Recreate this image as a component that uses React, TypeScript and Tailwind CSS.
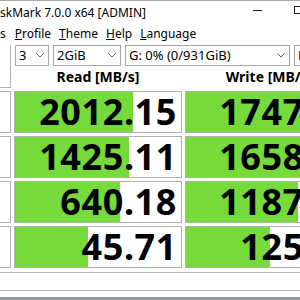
import React from 'react';

const rows = [
  { read: '2012.15', readBar: 118, write: '1747.42', writeBar: 116 },
  { read: '1425.11', readBar: 114, write: '1658.36', writeBar: 116 },
  { read: '640.18', readBar: 105, write: '1187.60', writeBar: 112 },
  { read: '45.71', readBar: 73, write: '125.93', writeBar: 84 },
];

const Chevron = () => (
  <svg width="8" height="5" viewBox="0 0 8 5" className="shrink-0">
    <polyline points="0.5,0.5 4,4 7.5,0.5" fill="none" stroke="#606060" strokeWidth="1" />
  </svg>
);

const Combo = ({ label, width }: { label: string; width: string }) => (
  <div className={`${width} h-[21px] shrink-0 flex items-center justify-between pl-[3px] pr-[4px] border border-[#a5a5a5] bg-white text-[13px] text-black`}>
    <span className="whitespace-nowrap leading-none">{label}</span>
    <Chevron />
  </div>
);

const ValueBox = ({ value, bar, width }: { value: string; bar: number; width: string }) => (
  <div className={`relative ${width} h-[42px] shrink-0 border border-[#b0b0b0] bg-white flex items-center justify-end pr-[4px]`}>
    <div className="absolute left-0 top-0 bottom-0 bg-[#76da3b]" style={{ width: bar }} />
    <span
      className="relative text-[36px] font-bold leading-none tracking-[0.6px] text-black"
      style={{ fontFamily: '"Liberation Sans Narrow", "Noto Sans", sans-serif' }}
    >
      {value}
    </span>
  </div>
);

const App: React.FC = () => {
  return (
    <div
      className="w-[300px] h-[300px] overflow-hidden bg-white flex flex-col text-black"
      style={{ fontFamily: '"Noto Sans", sans-serif' }}
    >
      {/* title bar */}
      <div className="h-[24px] shrink-0 border-t border-[#a8a8a8] flex items-center">
        <span className="w-[253px] shrink-0 text-[12px] whitespace-nowrap leading-none">skMark 7.0.0 x64 [ADMIN]</span>
        <div className="w-[9px] h-px bg-[#202020] shrink-0 -mt-[4px]" />
        <div className="w-[9px] h-[8px] border border-[#202020] shrink-0 ml-[32px] -mt-[5px]" />
      </div>

      {/* menu */}
      <div className="h-[20px] shrink-0 flex items-center gap-[8px] text-[12px] leading-none whitespace-nowrap">
        <span>s</span>
        <span className="ml-[1px]"><u>P</u>rofile</span>
        <span><u>T</u>heme</span>
        <span><u>H</u>elp</span>
        <span><u>L</u>anguage</span>
      </div>

      {/* controls + headers */}
      <div className="flex shrink-0 mt-[1px]">
        <div className="w-[11px] h-[43px] shrink-0 border-r border-b border-[#b0b0b0] bg-white" />
        <div className="flex flex-col ml-[4px]">
          <div className="flex gap-[4px] h-[21px]">
            <Combo label="3" width="w-[34px]" />
            <Combo label="2GiB" width="w-[68px]" />
            <Combo label="G: 0% (0/931GiB)" width="w-[165px]" />
            <Combo label="MB/s" width="w-[60px]" />
          </div>
          <div className="flex gap-[3px] h-[22px] items-center -ml-[1px]">
            <div className="w-[168px] text-center text-[14px] font-bold leading-none whitespace-nowrap">Read [MB/s]</div>
            <div className="w-[168px] shrink-0 text-center text-[14px] font-bold leading-none whitespace-nowrap">Write [MB/s]</div>
          </div>
        </div>
      </div>

      {/* results */}
      <div className="flex flex-col gap-[3px] mt-[3px] shrink-0">
        {rows.map((r) => (
          <div key={r.read} className="flex gap-[3px]">
            <div className="w-[11px] h-[42px] shrink-0 border-r border-y border-[#b0b0b0] bg-white" />
            <ValueBox value={r.read} bar={r.readBar} width="w-[168px]" />
            <ValueBox value={r.write} bar={r.writeBar} width="w-[177px]" />
          </div>
        ))}
      </div>

      {/* comment box */}
      <div className="h-[19px] shrink-0 mt-[4px] border-y border-[#b8b8b8] bg-white" />
      <div className="flex-1" />
      <div className="h-[3px] shrink-0 bg-[#8a9aa0]" />
    </div>
  );
};

export default App;
